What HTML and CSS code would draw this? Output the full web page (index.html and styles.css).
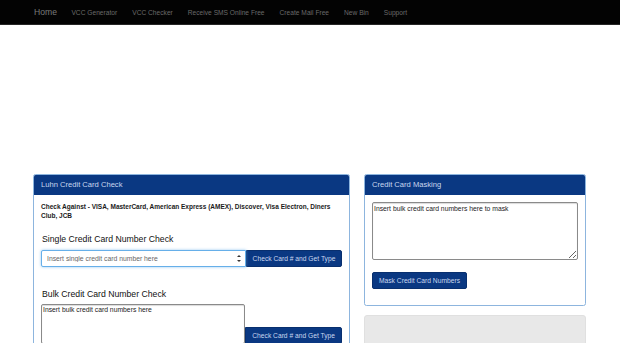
FILE: index.html
```html
<!DOCTYPE html>
<html>
<head>
<meta charset="utf-8">
<link rel="stylesheet" href="styles.css">
</head>
<body>
<nav class="navbar">
  <a class="brand">Home</a>
  <a class="nav-link">VCC Generator</a>
  <a class="nav-link">VCC Checker</a>
  <a class="nav-link">Receive SMS Online Free</a>
  <a class="nav-link">Create Mail Free</a>
  <a class="nav-link">New Bin</a>
  <a class="nav-link">Support</a>
</nav>
<div class="ad-space"></div>
<main class="container">
  <section class="col-left">
    <div class="panel">
      <div class="panel-heading">Luhn Credit Card Check</div>
      <div class="panel-body">
        <p class="against">Check Against - VISA, MasterCard, American Express (AMEX), Discover, Visa Electron, Diners Club, JCB</p>
        <h4 class="title">Single Credit Card Number Check</h4>
        <div class="input-group">
          <div class="num-wrap">
            <input class="num-input" type="text" placeholder="Insert single credit card number here">
            <span class="spinner"><i class="up"></i><i class="down"></i></span>
          </div>
          <button class="btn">Check Card # and Get Type</button>
        </div>
        <h4 class="title bulk">Bulk Credit Card Number Check</h4>
        <div class="input-group bottom">
          <textarea class="bulk-area" placeholder="Insert bulk credit card numbers here"></textarea>
          <button class="btn">Check Card # and Get Type</button>
        </div>
      </div>
    </div>
  </section>
  <section class="col-right">
    <div class="panel">
      <div class="panel-heading">Credit Card Masking</div>
      <div class="panel-body mask-body">
        <textarea class="mask-area" placeholder="Insert bulk credit card numbers here to mask"></textarea>
        <button class="btn mask-btn">Mask Credit Card Numbers</button>
      </div>
    </div>
    <div class="grey-box"></div>
  </section>
</main>
</body>
</html>
```

FILE: styles.css
```css
* { box-sizing: border-box; }
html, body { margin: 0; padding: 0; }
body {
  font-family: "Liberation Sans", Arial, sans-serif;
  font-size: 6.65px;
  color: #333;
  background: #fff;
  overflow: hidden;
}
.navbar {
  height: 25px;
  background: #030303;
  border-bottom: 1px solid #262626;
  display: flex;
  align-items: center;
  padding-left: 26.5px;
}
.navbar a { display: block; padding: 0 7.5px; }
.brand { font-size: 8.6px; color: #7a7a7a; padding-right: 7px !important; }
.nav-link { font-size: 6.65px; color: #6a6a6a; }
.ad-space { height: 149px; }
.container {
  display: grid;
  grid-template-columns: 317px 222px;
  column-gap: 14px;
  padding-left: 33px;
}
.panel {
  border: 1px solid #8db5de;
  border-radius: 2.5px;
  background: #fff;
  overflow: hidden;
}
.panel-heading {
  height: 19.5px;
  background: #0a3882;
  color: #c9d7ef;
  font-size: 7.6px;
  line-height: 19.5px;
  padding-left: 7px;
}
.panel-body { padding: 7px 7px 7px 7px; }
.against {
  margin: 0;
  font-weight: bold;
  font-size: 6.5px;
  line-height: 9.8px;
  color: #1a1a1a;
  padding-right: 8px;
}
.title {
  margin: 14px 0 5px 1px;
  font-size: 8.7px;
  font-weight: normal;
  line-height: 9.5px;
  color: #111;
}
.title.bulk { margin-top: 23px; }
.input-group { display: flex; align-items: stretch; }
.input-group.bottom { align-items: flex-end; }
.num-wrap { position: relative; width: 205px; }
.num-input {
  width: 205px;
  height: 17px;
  border: 1px solid #66afe9;
  border-radius: 2px 0 0 2px;
  box-shadow: 0 0 3px rgba(102,175,233,.7);
  font: 6.8px "Liberation Sans", Arial, sans-serif;
  padding: 0 5px;
  outline: none;
  color: #555;
}
.num-input::placeholder { color: #666; }
.spinner {
  position: absolute;
  right: 5px;
  top: 5px;
  width: 4px;
  height: 7px;
  display: flex;
  flex-direction: column;
  justify-content: space-between;
}
.spinner i {
  display: block;
  width: 0; height: 0;
  border-left: 2px solid transparent;
  border-right: 2px solid transparent;
}
.spinner .up { border-bottom: 2.5px solid #333; }
.spinner .down { border-top: 2.5px solid #333; }
.btn {
  background: #0a3882;
  color: #c9d7ef;
  border: 1px solid #082f6e;
  font: 6.7px "Liberation Sans", Arial, sans-serif;
  height: 17px;
  padding: 0;
  white-space: nowrap;
  border-radius: 2px;
  cursor: pointer;
}
.input-group .btn { width: 97px; border-radius: 0 2px 2px 0; }
.bulk-area {
  width: 205px;
  height: 40px;
  border: 1px solid #8a8a8a;
  border-radius: 2px;
  font: 6.8px "Liberation Sans", Arial, sans-serif;
  padding: 1px 1px;
  resize: none;
  outline: none;
  box-shadow: inset 0 1px 1px rgba(0,0,0,.15);
}
.bulk-area::placeholder, .mask-area::placeholder { color: #222; }
.mask-body { padding: 7px 7px 16px; }
.mask-area {
  display: block;
  width: 206px;
  height: 58px;
  border: 1px solid #8a8a8a;
  border-radius: 2px;
  font: 6.8px "Liberation Sans", Arial, sans-serif;
  padding: 2px 1px;
  outline: none;
  box-shadow: inset 0 1px 1px rgba(0,0,0,.15);
  margin-bottom: 12px;
}
.mask-btn { display: block; width: 95px; }
.grey-box {
  margin-top: 9px;
  height: 60px;
  background: #e8e8e8;
  border: 1px solid #e0e0e0;
  border-radius: 3px;
}
```
